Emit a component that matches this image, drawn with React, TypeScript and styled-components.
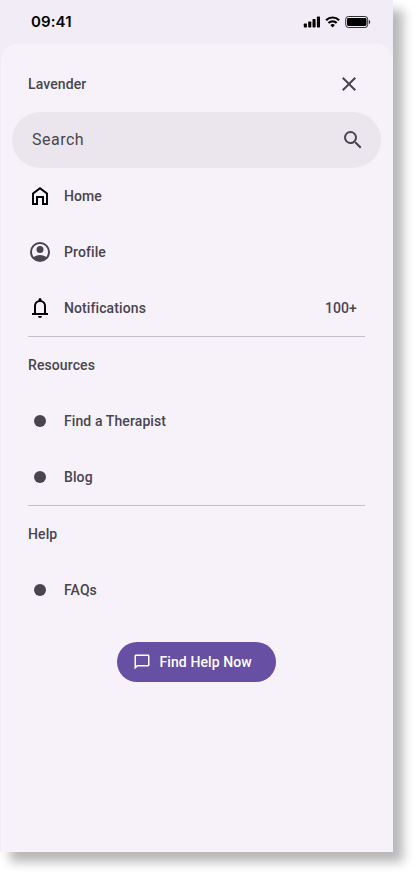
import React from "react";
import styled, { createGlobalStyle } from "styled-components";

const GlobalStyle = createGlobalStyle`
  *, *::before, *::after { box-sizing: border-box; }
  html, body { margin: 0; background: #fff; }
  body { width: 413px; height: 872px; overflow: hidden; }
  button { font: inherit; border: 0; padding: 0; background: none; color: inherit; }
  svg { display: block; flex: none; }
`;

const Phone = styled.main`
  width: 393px;
  height: 852px;
  display: flex;
  flex-direction: column;
  background: #f2ecf7;
  color: #49454f;
  font-family: Roboto, sans-serif;
  box-shadow: 10px 10px 10px #b8b8b8;
`;

const StatusBar = styled.header`
  height: 44px;
  flex: none;
  display: flex;
  align-items: center;
  justify-content: space-between;
  padding: 0 22px 0 31px;
  color: #000;
`;

const Clock = styled.time`
  font: 600 15px/20px Inter, sans-serif;
  letter-spacing: 0.1px;
`;

const StatusIcons = styled.div`
  display: flex;
  align-items: center;
  gap: 5px;
`;

const Drawer = styled.nav`
  flex: 1;
  margin-left: 1px;
  padding: 12px 12px 0 11px;
  display: flex;
  flex-direction: column;
  border-radius: 16px 16px 0 0;
  background: #f7f2fa;
`;

const Row = styled.div`
  height: 56px;
  display: flex;
  align-items: center;
  gap: 12px;
  padding: 0 24px 0 16px;
  font-size: 14px;
  font-weight: 500;
  line-height: 20px;
  letter-spacing: 0.1px;
`;

const Title = styled.h2`
  flex: 1;
  margin: 0;
  font: inherit;
`;

const CloseButton = styled.button`
  width: 24px;
  margin-right: -4px;
`;

const SearchBar = styled.div`
  height: 56px;
  display: flex;
  align-items: center;
  justify-content: space-between;
  padding: 0 16px 0 20px;
  border-radius: 28px;
  background: #ebe6ed;
  font-size: 16px;
  line-height: 24px;
  letter-spacing: 0.5px;
`;

const IconSlot = styled.span<{ $tone?: string }>`
  width: 24px;
  height: 24px;
  display: grid;
  place-items: center;
  color: ${({ $tone }) => $tone ?? "#49454f"};
`;

const Label = styled.span`
  flex: 1;
`;

const Badge = styled.span`
  text-align: right;
`;

const Dot = styled.i`
  width: 12px;
  height: 12px;
  border-radius: 50%;
  background: #49454f;
`;

const Divider = styled.hr`
  height: 1px;
  flex: none;
  margin: 0 16px;
  border: 0;
  background: #c4bfc8;
`;

const HelpButton = styled.button`
  align-self: center;
  display: flex;
  align-items: center;
  gap: 8.5px;
  width: 159px;
  height: 40px;
  margin-top: 24px;
  && { padding: 0 0 0 16px; background: #6750a4; color: #fff; }
  border-radius: 20px;
  font-size: 14px;
  font-weight: 500;
  line-height: 20px;
  letter-spacing: 0.1px;
`;

const icons = {
  close: "M19 6.41 17.59 5 12 10.59 6.41 5 5 6.41 10.59 12 5 17.59 6.41 19 12 13.41 17.59 19 19 17.59 13.41 12z",
  search:
    "M15.5 14h-.79l-.28-.27A6.47 6.47 0 0 0 16 9.5 6.5 6.5 0 1 0 9.5 16c1.61 0 3.09-.59 4.23-1.57l.27.28v.79l5 4.99L20.49 19l-4.99-5zm-6 0C7.01 14 5 11.99 5 9.5S7.01 5 9.5 5 14 7.01 14 9.5 11.99 14 9.5 14z",
  home: "M6 19h3v-6h6v6h3v-9l-6-4.5L6 10v9zm-2 2V9l8-6 8 6v12h-7v-6h-2v6H4z",
  bell: "M4 19v-2h2v-7c0-1.38.42-2.61 1.25-3.69A5.98 5.98 0 0 1 10.5 4.2v-.7a1.5 1.5 0 0 1 3 0v.7c1.33.33 2.42 1.04 3.25 2.11A5.87 5.87 0 0 1 18 10v7h2v2H4zm8 3a2 2 0 0 1-2-2h4a2 2 0 0 1-2 2zm-4-5h8v-7a4 4 0 0 0-8 0v7z",
  chat: "M20 2H4c-1.1 0-2 .9-2 2v18l4-4h14c1.1 0 2-.9 2-2V4c0-1.1-.9-2-2-2zm0 14H5.17L4 17.17V4h16v12z",
};

function Icon({ name, size = 24 }: { name: keyof typeof icons; size?: number }) {
  // Home's side walls join its roof; the door opening is cut from the outline.
  const path = name === "home" ? "M4 21V9l8-6 8 6v12h-6v-7h-4v7H4zm2-2h2v-7h8v7h2v-9l-6-4.5L6 10v9z" : icons[name];
  return (
    <svg width={size} height={size} viewBox="0 0 24 24" fill="currentColor" aria-hidden="true">
      <path d={path} />
    </svg>
  );
}

function AccountIcon() {
  return (
    <svg width="24" height="24" viewBox="0 0 24 24" aria-hidden="true">
      <circle cx="12" cy="12" r="9" fill="none" stroke="currentColor" strokeWidth="2" />
      <circle cx="12" cy="9.5" r="3.5" fill="currentColor" />
      <path d="M5.2 17.5C7 15.9 9.3 15 12 15s5 .9 6.8 2.5A9 9 0 0 1 12 21a9 9 0 0 1-6.8-3.5z" fill="currentColor" />
    </svg>
  );
}

const SignalIcon = () => (
  <svg width="17" height="12" viewBox="0 0 17 12" aria-hidden="true">
    <rect x=".8" y="7.6" width="3.1" height="3.8" rx=".7" />
    <rect x="5.2" y="5.6" width="3.1" height="5.8" rx=".7" />
    <rect x="9.5" y="3.1" width="3.1" height="8.3" rx=".7" />
    <rect x="13.9" y=".5" width="3.1" height="10.9" rx=".7" />
  </svg>
);

const WifiIcon = () => (
  <svg width="15" height="12" viewBox="0 0 15 12" fill="none" stroke="#000" strokeWidth="2.2" aria-hidden="true">
    <path d="M1.1 4.2a9.2 9.2 0 0 1 13 0M3.5 7a5.8 5.8 0 0 1 8.2 0" />
    <path d="M7.6 11.4 5.3 9.1a3.3 3.3 0 0 1 4.6 0z" fill="#000" stroke="none" />
  </svg>
);

const BatteryIcon = () => (
  <svg width="26" height="12" viewBox="0 0 26 12" aria-hidden="true">
    <rect x=".7" y=".5" width="22" height="11" rx="2.8" fill="none" stroke="#000" strokeOpacity=".8" />
    <rect x="2" y="2" width="19.5" height="8" rx="1.4" />
    <path d="M23.9 4v4c.8-.3 1.3-1.1 1.3-2s-.5-1.7-1.3-2z" fillOpacity=".8" />
  </svg>
);

function MenuItem({ icon, tone, label, badge }: { icon: React.ReactNode; tone?: string; label: string; badge?: string }) {
  return (
    <Row>
      <IconSlot $tone={tone}>{icon}</IconSlot>
      <Label>{label}</Label>
      {badge && <Badge>{badge}</Badge>}
    </Row>
  );
}

export default function App() {
  return (
    <>
      <GlobalStyle />
      <Phone>
        <StatusBar>
          <Clock>09:41</Clock>
          <StatusIcons>
            <SignalIcon />
            <WifiIcon />
            <BatteryIcon />
          </StatusIcons>
        </StatusBar>
        <Drawer>
          <Row>
            <Title>Lavender</Title>
            <CloseButton aria-label="Close"><Icon name="close" /></CloseButton>
          </Row>
          <SearchBar>
            <span>Search</span>
            <Icon name="search" />
          </SearchBar>
          <MenuItem icon={<Icon name="home" />} tone="#000" label="Home" />
          <MenuItem icon={<AccountIcon />} label="Profile" />
          <MenuItem icon={<Icon name="bell" />} tone="#000" label="Notifications" badge="100+" />
          <Divider />
          <Row><Title>Resources</Title></Row>
          <MenuItem icon={<Dot />} label="Find a Therapist" />
          <MenuItem icon={<Dot />} label="Blog" />
          <Divider />
          <Row><Title>Help</Title></Row>
          <MenuItem icon={<Dot />} label="FAQs" />
          <HelpButton>
            <Icon name="chat" size={18} />
            Find Help Now
          </HelpButton>
        </Drawer>
      </Phone>
    </>
  );
}
